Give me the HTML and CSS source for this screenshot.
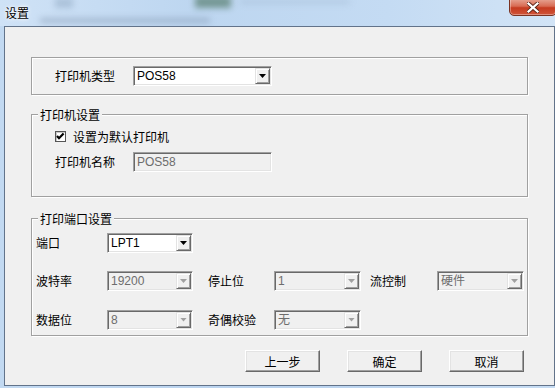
FILE: index.html
```html
<!DOCTYPE html>
<html lang="zh-CN">
<head>
    <meta charset="UTF-8">
    <title>设置</title>
    <link rel="stylesheet" href="styles.css">
</head>
<body>
    <div class="window">
        <div class="titlebar">
            <span class="glass g1"></span>
            <span class="glass g2"></span>
            <span class="glass g3"></span>
            <span class="glass g4"></span>
            <span class="title">设置</span>
            <span class="close">
                <svg width="12" height="11" viewBox="0 0 12 11"><path d="M1.5 1.5l9 8M10.5 1.5l-9 8" stroke="#5a2418" stroke-width="4" stroke-linecap="square"/><path d="M1.5 1.5l9 8M10.5 1.5l-9 8" stroke="#fff" stroke-width="2.2" stroke-linecap="square"/></svg>
            </span>
        </div>

        <div class="client">
            <fieldset class="group group-type">
                <div class="row">
                    <span class="lbl lbl-wide">打印机类型</span>
                    <div class="combo combo-wide">
                        <span class="value">POS58</span>
                        <span class="arrow"></span>
                    </div>
                </div>
            </fieldset>

            <fieldset class="group group-printer">
                <legend>打印机设置</legend>
                <div class="check-row">
                    <span class="check">
                        <svg width="9" height="9" viewBox="0 0 9 9"><path d="M1 4l2 2.2L7.6 1.4" fill="none" stroke="#000" stroke-width="2.2"/></svg>
                    </span>
                    <span class="check-text">设置为默认打印机</span>
                </div>
                <div class="row name-row">
                    <span class="lbl lbl-wide">打印机名称</span>
                    <div class="textbox disabled">POS58</div>
                </div>
            </fieldset>

            <fieldset class="group group-port">
                <legend>打印端口设置</legend>
                <div class="port-grid">
                    <span class="lbl">端口</span>
                    <div class="combo combo-port">
                        <span class="value">LPT1</span>
                        <span class="arrow"></span>
                    </div>
                    <span></span><span></span><span></span><span></span>

                    <span class="lbl">波特率</span>
                    <div class="combo combo-s disabled">
                        <span class="value">19200</span>
                        <span class="arrow"></span>
                    </div>
                    <span class="lbl">停止位</span>
                    <div class="combo combo-m disabled">
                        <span class="value">1</span>
                        <span class="arrow"></span>
                    </div>
                    <span class="lbl">流控制</span>
                    <div class="combo combo-m disabled">
                        <span class="value">硬件</span>
                        <span class="arrow"></span>
                    </div>

                    <span class="lbl">数据位</span>
                    <div class="combo combo-s disabled">
                        <span class="value">8</span>
                        <span class="arrow"></span>
                    </div>
                    <span class="lbl">奇偶校验</span>
                    <div class="combo combo-m disabled">
                        <span class="value">无</span>
                        <span class="arrow"></span>
                    </div>
                </div>
            </fieldset>

            <div class="buttons">
                <button>上一步</button>
                <button>确定</button>
                <button>取消</button>
            </div>
        </div>
    </div>
</body>
</html>
```

FILE: styles.css
```css
body {
    margin: 0;
    width: 555px;
    height: 388px;
    overflow: hidden;
    background: linear-gradient(90deg, #c2d9f1, #b9d2ee 50%, #c6dcf3);
    font-family: "Noto Sans CJK SC", sans-serif;
    font-size: 12px;
    color: #000;
}
.window {
    display: flex;
    flex-direction: column;
    height: 388px;
}
.titlebar {
    position: relative;
    height: 26px;
    display: flex;
    align-items: center;
    padding-left: 5px;
    overflow: hidden;
    background: linear-gradient(90deg, #cfe2f6, #bdd6f0 35%, #c4dbf3 70%, #d2e4f6);
}
.glass {
    position: absolute;
    filter: blur(3px);
    opacity: 0.5;
}
.g1 { left: 195px; top: -4px; width: 36px; height: 12px; background: #2e5a3a; }
.g2 { left: 40px; top: 18px; width: 170px; height: 5px; background: #7f93ad; }
.g3 { left: 55px; top: -2px; width: 18px; height: 10px; background: #8ea6c0; }
.g4 { left: 240px; top: 0; width: 110px; height: 4px; background: #9fb6cf; }
.title {
    position: relative;
    line-height: 14px;
    text-shadow: 0 0 5px #fff, 0 0 3px #fff;
}
.close {
    position: relative;
    align-self: flex-start;
    margin-left: auto;
    margin-right: -2px;
    margin-top: -2px;
    width: 48px;
    height: 18px;
    display: flex;
    align-items: center;
    justify-content: center;
    padding-top: 1px;
    box-sizing: border-box;
    border: 1px solid #7a3322;
    border-radius: 0 0 5px 5px;
    background: linear-gradient(#e6a594, #d86b53 45%, #c53b20 55%, #d0553a);
    box-shadow: inset 0 0 0 1px rgba(255, 255, 255, 0.35);
}
.client {
    margin-left: 4px;
    width: 551px;
    height: 360px;
    box-sizing: border-box;
    border: 1px solid #62738a;
    background: #f0f0f0;
    padding: 30px 26px 0 26px;
}
.group {
    margin: 0;
    padding: 0;
    min-width: 0;
    border: 1px solid #a0a0a0;
    box-shadow: 1px 1px 0 #fff, inset 1px 1px 0 #fff;
}
.group legend {
    margin-left: 6px;
    padding: 0 2px;
    line-height: 13px;
    background: #f0f0f0;
}
.group-type {
    padding: 8px 0 8px 23px;
}
.group-printer {
    margin-top: 13px;
    padding-bottom: 24px;
}
.group-printer .check-row,
.group-printer .name-row {
    padding-left: 23px;
}
.group-port {
    margin-top: 15px;
    padding-bottom: 6px;
}
.row {
    display: flex;
    align-items: center;
}
.lbl {
    line-height: 14px;
    white-space: nowrap;
}
.lbl-wide {
    width: 78px;
}
.combo {
    display: flex;
    align-items: stretch;
    height: 20px;
    box-sizing: border-box;
    border: 1px solid;
    border-color: #a0a0a0 #fff #fff #a0a0a0;
    box-shadow: inset 1px 1px 0 #696969, inset -1px -1px 0 #e3e3e3;
    background: #fff;
    padding: 1px;
    font-family: "Liberation Sans", "Noto Sans CJK SC", sans-serif;
}
.combo .value {
    flex: 1;
    padding-left: 2px;
    line-height: 16px;
}
.arrow {
    width: 15px;
    box-sizing: border-box;
    border: 1px solid;
    border-color: #e3e3e3 #696969 #696969 #e3e3e3;
    box-shadow: inset 1px 1px 0 #fff, inset -1px -1px 0 #a0a0a0;
    background: #f0f0f0;
    display: flex;
    align-items: center;
    justify-content: center;
}
.arrow::after {
    content: "";
    width: 7px;
    height: 4px;
    background: #000;
    clip-path: polygon(0 0, 100% 0, 50% 100%);
}
.combo.disabled {
    background: #f0f0f0;
    color: #6d6d6d;
}
.combo.disabled .arrow::after {
    background: #a0a0a0;
}
.combo-wide {
    width: 139px;
}
.combo-port,
.combo-s {
    width: 86px;
}
.combo-m {
    width: 87px;
}
.check-row {
    display: flex;
    align-items: center;
    margin-top: 7px;
    height: 16px;
}
.check {
    width: 11px;
    height: 11px;
    box-sizing: border-box;
    border: 1px solid #555;
    box-shadow: inset 1px 1px 0 #c8c8c8;
    background: #fff;
    display: flex;
    align-items: center;
    justify-content: center;
}
.check-text {
    margin-left: 7px;
}
.name-row {
    margin-top: 8px;
}
.textbox {
    width: 139px;
    height: 20px;
    box-sizing: border-box;
    border: 1px solid;
    border-color: #a0a0a0 #fff #fff #a0a0a0;
    box-shadow: inset 1px 1px 0 #696969, inset -1px -1px 0 #e3e3e3;
    padding: 1px 3px;
    line-height: 16px;
    font-family: "Liberation Sans", sans-serif;
}
.textbox.disabled {
    background: #f0f0f0;
    color: #6d6d6d;
}
.port-grid {
    display: grid;
    grid-template-columns: 71px 101px 66px 96px 67px 87px;
    grid-template-rows: 20px 20px 20px;
    row-gap: 18px;
    align-items: center;
    padding: 8px 0 0 4px;
}
.port-grid > :nth-child(n+13) {
    margin-top: 1px;
}
.buttons {
    display: flex;
    justify-content: flex-end;
    gap: 27px;
    margin-top: 14px;
    padding-right: 4px;
}
button {
    width: 75px;
    height: 22px;
    padding: 0;
    font-family: "Noto Sans CJK SC", sans-serif;
    font-size: 12px;
    color: #000;
    background: #f0f0f0;
    border: 1px solid;
    border-color: #fff #696969 #696969 #fff;
    box-shadow: inset -1px -1px 0 #a0a0a0, inset 1px 1px 0 #e3e3e3;
}
```
